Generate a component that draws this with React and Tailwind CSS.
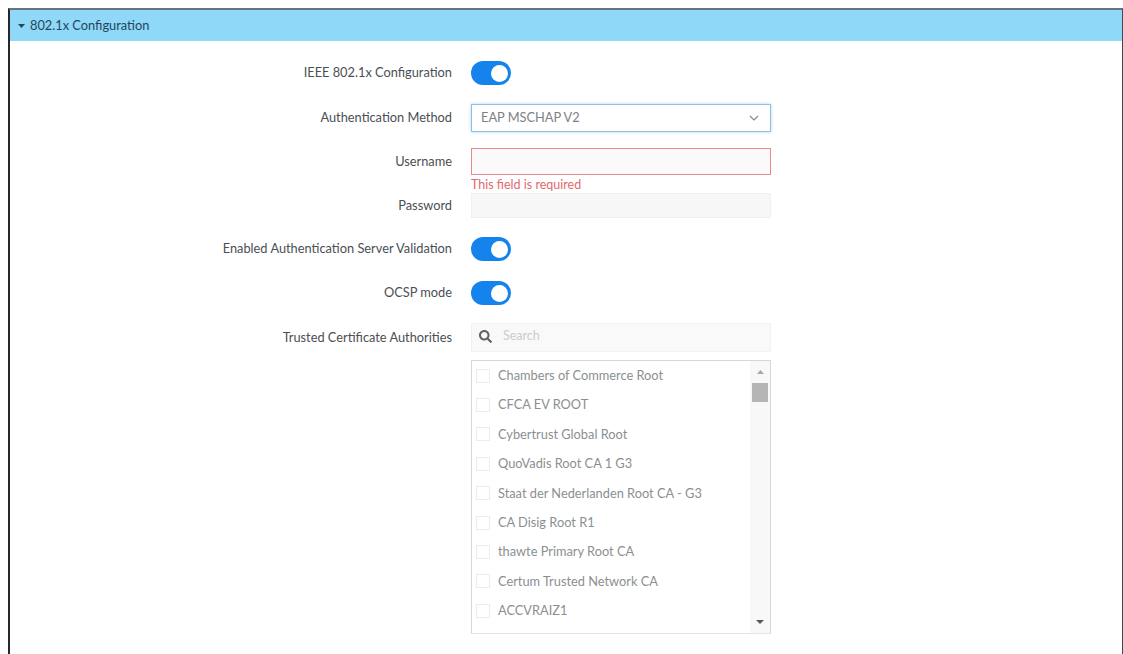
import { FaSearch } from "react-icons/fa";

const authorities = [
  "Chambers of Commerce Root",
  "CFCA EV ROOT",
  "Cybertrust Global Root",
  "QuoVadis Root CA 1 G3",
  "Staat der Nederlanden Root CA - G3",
  "CA Disig Root R1",
  "thawte Primary Root CA",
  "Certum Trusted Network CA",
  "ACCVRAIZ1",
];

function Toggle() {
  return (
    <div className="flex h-[24px] w-[40px] items-center justify-end rounded-full bg-[#1583ec] pr-[3px]">
      <div className="h-[17px] w-[17px] rounded-full bg-white" />
    </div>
  );
}

function Row({ label, className, children }) {
  return (
    <div className={`flex items-center ${className}`}>
      <div className="w-[443px] pr-[1px] text-right text-[12.8px] text-[#4a4f54]">{label}</div>
      <div className="ml-[18px] w-[300px]">{children}</div>
    </div>
  );
}

export default function App() {
  return (
    <div className="h-[654px] overflow-hidden bg-white pl-[8px] pt-[8px] font-['Lato',sans-serif]">
      <div className="h-[646px] w-[1115px] border-l-2 border-r border-t-2 border-l-[#26282b] border-r-[#3d4a52] border-t-[#66757c]">
        <div className="flex h-[31px] items-center gap-[5px] bg-[#8fd8f8] pl-[8px] text-[12.8px] text-[#24465c]">
          <svg width="7" height="4" viewBox="0 0 7 4">
            <path d="M0 0h7L3.5 4z" fill="#24465c" />
          </svg>
          802.1x Configuration
        </div>

        <Row label="IEEE 802.1x Configuration" className="mt-[20px]">
          <Toggle />
        </Row>

        <Row label="Authentication Method" className="mt-[19px]">
          <div className="flex h-[28px] items-center justify-between border border-[#8ec1e4] pl-[9px] pr-[11px] text-[12.8px] text-[#7d8285] shadow-[0_0_3px_#a8d4f0]">
            EAP MSCHAP V2
            <svg width="10" height="6" viewBox="0 0 10 6" fill="none" stroke="#7f8a92" strokeWidth="1.2">
              <path d="M1 1l4 4 4-4" />
            </svg>
          </div>
        </Row>

        <Row label="Username" className="mt-[16px]">
          <div className="h-[27px] border border-[#e88a8a] bg-[#fbfafa]" />
        </Row>
        <div className="ml-[461px] h-[18px] text-[12.5px] leading-[20px] text-[#e2696b]">This field is required</div>

        <Row label="Password">
          <div className="h-[25px] border border-[#f0f0f0] bg-[#f7f7f7]" />
        </Row>

        <Row label="Enabled Authentication Server Validation" className="mt-[19px]">
          <Toggle />
        </Row>

        <Row label="OCSP mode" className="mt-[20px]">
          <Toggle />
        </Row>

        <Row label="Trusted Certificate Authorities" className="mt-[18px]">
          <div className="flex h-[29px] items-center border border-[#f1f1f1] bg-[#f9f9f9] pb-[2px] pl-[7px] text-[12.5px] text-[#c9cccd]">
            <FaSearch className="mr-[11px] text-[13px] text-[#5d6367]" />
            Search
          </div>
        </Row>

        <div className="ml-[461px] mt-[8px] flex h-[274px] w-[300px] border border-[#d4d7d9] border-b-[#e2e4e5]">
          <div className="flex-1 pl-[4px]">
            {authorities.map((name) => (
              <div key={name} className="flex h-[29.4px] items-center gap-[8px] text-[12.8px] text-[#8b8f91]">
                <div className="h-[14px] w-[14px] border border-[#ececec]" />
                {name}
              </div>
            ))}
          </div>
          <div className="flex w-[20px] flex-col items-center bg-[#f8f8f8] pb-[9px] pt-[9px]">
            <svg width="7" height="4" viewBox="0 0 7 4">
              <path d="M0 4h7L3.5 0z" fill="#a5a8aa" />
            </svg>
            <div className="mt-[9px] h-[19px] w-[16px] bg-[#b5b5b5]" />
            <svg className="mt-auto" width="8" height="4" viewBox="0 0 8 4">
              <path d="M0 0h8L4 4z" fill="#55595c" />
            </svg>
          </div>
        </div>
      </div>
    </div>
  );
}
